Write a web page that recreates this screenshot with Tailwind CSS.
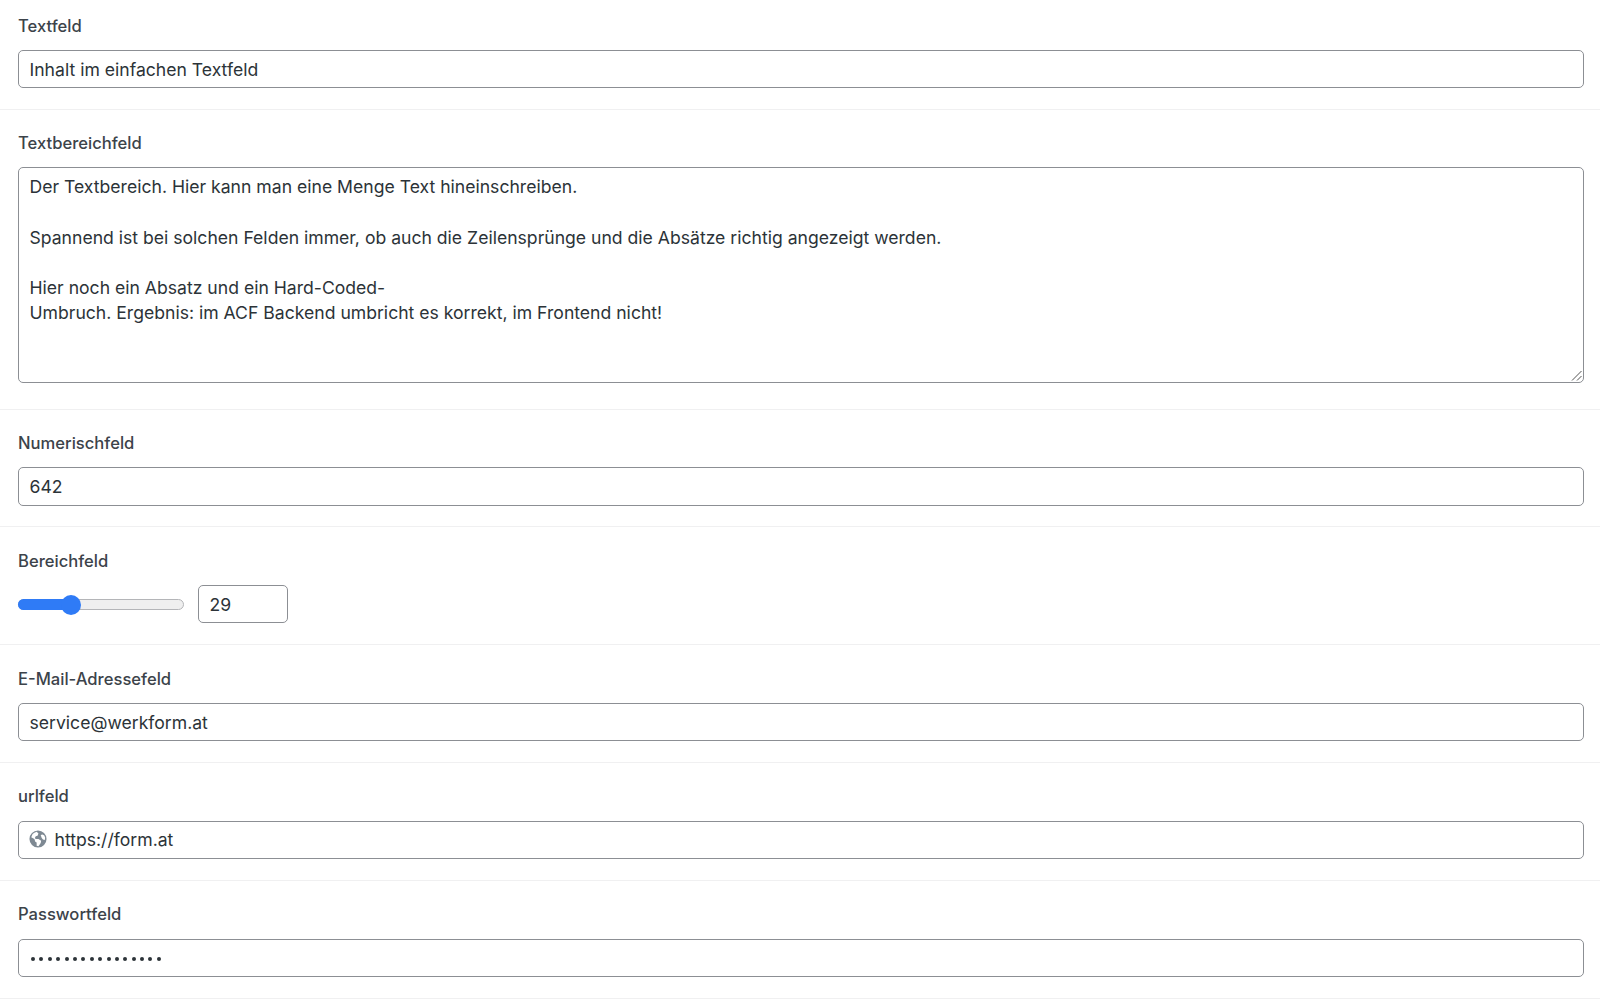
<!DOCTYPE html>
<html lang="de">
<head>
<meta charset="utf-8">
<script src="https://cdn.jsdelivr.net/npm/@tailwindcss/browser@4"></script>
<title>Felder</title>
</head>
<body class="bg-white font-['Inter','Liberation_Sans',sans-serif] text-[#2c3338] overflow-hidden">
<div class="flex flex-col">
  <section class="px-[18px] pr-[16px] h-[109.7px] pt-[15.5px] border-b border-[#f0f0f1] flex flex-col">
    <label class="h-[20px] leading-[20px] text-[16.6px] font-medium text-[#3c434a]">Textfeld</label>
    <div class="mt-[14.5px] h-[38.2px] border border-[#8c8f94] rounded-[5px] px-[10.5px] text-[17.6px] leading-[37px] bg-white">Inhalt im einfachen Textfeld</div>
  </section>
  <section class="px-[18px] pr-[16px] h-[300px] pt-[23.3px] border-b border-[#f0f0f1] flex flex-col">
    <label class="h-[20px] leading-[20px] text-[16.6px] font-medium text-[#3c434a]">Textbereichfeld</label>
    <div class="relative mt-[14.5px] h-[215.5px] border border-[#8c8f94] rounded-[5px] px-[10.5px] pt-[6px] text-[17.6px] leading-[25.2px] bg-white">
      <p>Der Textbereich. Hier kann man eine Menge Text hineinschreiben.</p>
      <p class="mt-[25.2px]">Spannend ist bei solchen Felden immer, ob auch die Zeilensprünge und die Absätze richtig angezeigt werden.</p>
      <p class="mt-[25.2px]">Hier noch ein Absatz und ein Hard-Coded-<br>Umbruch. Ergebnis: im ACF Backend umbricht es korrekt, im Frontend nicht!</p>
      <svg class="absolute right-0 bottom-0 w-[12px] h-[12px]" viewBox="0 0 12 12" fill="none" stroke="#555" stroke-width="1"><path d="M1 10.500 10.500 1M6 10.500l4.500-4.500"/></svg>
    </div>
  </section>
  <section class="px-[18px] pr-[16px] h-[117.8px] pt-[23.3px] border-b border-[#f0f0f1] flex flex-col">
    <label class="h-[20px] leading-[20px] text-[16.6px] font-medium text-[#3c434a]">Numerischfeld</label>
    <div class="mt-[14.5px] h-[38.2px] border border-[#8c8f94] rounded-[5px] px-[10.5px] text-[17.6px] leading-[37px] bg-white">642</div>
  </section>
  <section class="px-[18px] pr-[16px] h-[117.8px] pt-[23.3px] border-b border-[#f0f0f1] flex flex-col">
    <label class="h-[20px] leading-[20px] text-[16.6px] font-medium text-[#3c434a]">Bereichfeld</label>
    <div class="mt-[14.5px] h-[38.2px] flex items-center gap-[14px]">
      <div class="relative w-[166px] h-[11px] rounded-full border border-[#b4b5b8] bg-[#efefef]">
        <div class="absolute -left-px -top-px h-[11px] w-[52px] rounded-full bg-[#2f7bf6]"></div>
        <div class="absolute left-[42px] top-[-5px] w-[20px] h-[20px] rounded-full bg-[#2f7bf6]"></div>
      </div>
      <div class="w-[90px] h-[38.2px] border border-[#8c8f94] rounded-[5px] px-[10.5px] text-[17.6px] leading-[37px] bg-white">29</div>
    </div>
  </section>
  <section class="px-[18px] pr-[16px] h-[117.8px] pt-[23.3px] border-b border-[#f0f0f1] flex flex-col">
    <label class="h-[20px] leading-[20px] text-[16.6px] font-medium text-[#3c434a]">E-Mail-Adressefeld</label>
    <div class="mt-[14.5px] h-[38.2px] border border-[#8c8f94] rounded-[5px] px-[10.5px] text-[17.6px] leading-[37px] bg-white">service@werkform.at</div>
  </section>
  <section class="px-[18px] pr-[16px] h-[117.8px] pt-[23.3px] border-b border-[#f0f0f1] flex flex-col">
    <label class="h-[20px] leading-[20px] text-[16.6px] font-medium text-[#3c434a]">urlfeld</label>
    <div class="mt-[14.5px] h-[38.2px] border border-[#8c8f94] rounded-[5px] pl-[10px] pr-[10.5px] text-[17.6px] leading-[37px] bg-white flex items-center gap-[7.5px]">
      <svg class="w-[18px] h-[18px] -mt-[2.5px] shrink-0" viewBox="0 0 20 20"><path fill="#7e8993" fill-rule="evenodd" d="M10 .5a9.500 9.500 0 1 1 0 19 9.500 9.500 0 0 1 0-19zM4 4.500 2.500 8l3.500 2 1 3 1.500 1v3.500l2 .5 2.500-3.500.5-2.500-3-2-3 0-1-1 1-2 2-.5 1-2.500L8.500 2 6 3zm11 .500-2 .5 1 3 1.500 2 2 .5.500-2.500-1-2.500z"/></svg>
      <span>https://form.at</span>
    </div>
  </section>
  <section class="px-[18px] pr-[16px] h-[117.8px] pt-[23.3px] border-b border-[#f0f0f1] flex flex-col">
    <label class="h-[20px] leading-[20px] text-[16.6px] font-medium text-[#3c434a]">Passwortfeld</label>
    <div class="mt-[14.5px] h-[38.2px] border border-[#8c8f94] rounded-[5px] pl-[12px] pr-[10px] pt-[2px] bg-white flex items-center gap-[4.4px]">
      <span class="w-[4px] h-[4px] rounded-full bg-[#2c3338]"></span><span class="w-[4px] h-[4px] rounded-full bg-[#2c3338]"></span><span class="w-[4px] h-[4px] rounded-full bg-[#2c3338]"></span><span class="w-[4px] h-[4px] rounded-full bg-[#2c3338]"></span><span class="w-[4px] h-[4px] rounded-full bg-[#2c3338]"></span><span class="w-[4px] h-[4px] rounded-full bg-[#2c3338]"></span><span class="w-[4px] h-[4px] rounded-full bg-[#2c3338]"></span><span class="w-[4px] h-[4px] rounded-full bg-[#2c3338]"></span><span class="w-[4px] h-[4px] rounded-full bg-[#2c3338]"></span><span class="w-[4px] h-[4px] rounded-full bg-[#2c3338]"></span><span class="w-[4px] h-[4px] rounded-full bg-[#2c3338]"></span><span class="w-[4px] h-[4px] rounded-full bg-[#2c3338]"></span><span class="w-[4px] h-[4px] rounded-full bg-[#2c3338]"></span><span class="w-[4px] h-[4px] rounded-full bg-[#2c3338]"></span><span class="w-[4px] h-[4px] rounded-full bg-[#2c3338]"></span><span class="w-[4px] h-[4px] rounded-full bg-[#2c3338]"></span>
    </div>
  </section>
</div>
</body>
</html>
